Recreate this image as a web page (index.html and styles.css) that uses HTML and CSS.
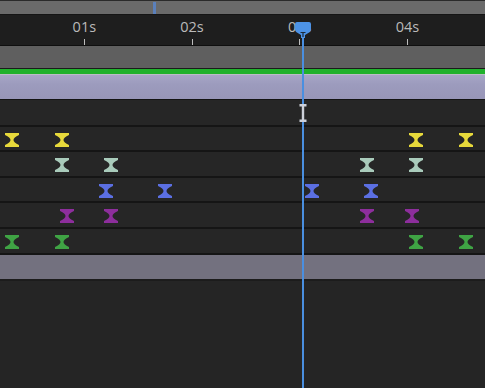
FILE: index.html
```html
<!DOCTYPE html>
<html lang="en">
<head>
  <meta charset="UTF-8">
  <meta name="viewport" content="width=device-width, initial-scale=1.0">
  <title>Timeline</title>
  <link rel="stylesheet" href="styles.css">
</head>
<body>
  <div class="timeline">
    <div class="nav-bar">
      <span class="nav-marker"></span>
    </div>

    <div class="ruler">
      <div class="sec"><span class="label">01s</span><span class="tick"></span></div>
      <div class="sec"><span class="label">02s</span><span class="tick"></span></div>
      <div class="sec"><span class="label">03s</span><span class="tick"></span></div>
      <div class="sec"><span class="label">04s</span><span class="tick"></span></div>
    </div>

    <div class="work-area"></div>
    <div class="green-bar"></div>
    <div class="layer-bar"></div>

    <div class="row row-first"></div>

    <div class="row">
      <svg class="key yellow" style="left: 5px" viewBox="0 0 14 14"><use href="#hourglass"/></svg>
      <svg class="key yellow" style="left: 55px" viewBox="0 0 14 14"><use href="#hourglass"/></svg>
      <svg class="key yellow" style="left: 409px" viewBox="0 0 14 14"><use href="#hourglass"/></svg>
      <svg class="key yellow" style="left: 459px" viewBox="0 0 14 14"><use href="#hourglass"/></svg>
    </div>
    <div class="row">
      <svg class="key mint" style="left: 55px" viewBox="0 0 14 14"><use href="#hourglass"/></svg>
      <svg class="key mint" style="left: 104px" viewBox="0 0 14 14"><use href="#hourglass"/></svg>
      <svg class="key mint" style="left: 360px" viewBox="0 0 14 14"><use href="#hourglass"/></svg>
      <svg class="key mint" style="left: 409px" viewBox="0 0 14 14"><use href="#hourglass"/></svg>
    </div>
    <div class="row">
      <svg class="key blue" style="left: 99px" viewBox="0 0 14 14"><use href="#hourglass"/></svg>
      <svg class="key blue" style="left: 158px" viewBox="0 0 14 14"><use href="#hourglass"/></svg>
      <svg class="key blue" style="left: 305px" viewBox="0 0 14 14"><use href="#hourglass"/></svg>
      <svg class="key blue" style="left: 364px" viewBox="0 0 14 14"><use href="#hourglass"/></svg>
    </div>
    <div class="row">
      <svg class="key purple" style="left: 60px" viewBox="0 0 14 14"><use href="#hourglass"/></svg>
      <svg class="key purple" style="left: 104px" viewBox="0 0 14 14"><use href="#hourglass"/></svg>
      <svg class="key purple" style="left: 360px" viewBox="0 0 14 14"><use href="#hourglass"/></svg>
      <svg class="key purple" style="left: 405px" viewBox="0 0 14 14"><use href="#hourglass"/></svg>
    </div>
    <div class="row">
      <svg class="key green" style="left: 5px" viewBox="0 0 14 14"><use href="#hourglass"/></svg>
      <svg class="key green" style="left: 55px" viewBox="0 0 14 14"><use href="#hourglass"/></svg>
      <svg class="key green" style="left: 409px" viewBox="0 0 14 14"><use href="#hourglass"/></svg>
      <svg class="key green" style="left: 459px" viewBox="0 0 14 14"><use href="#hourglass"/></svg>
    </div>

    <div class="null-bar"></div>
    <div class="empty"></div>

    <!-- playhead sits over everything -->
    <div class="playhead">
      <svg class="playhead-head" viewBox="0 0 18 16">
        <path d="M3 0 H15 Q17 0 17 2 V7.5 Q17 9 15.5 10.2 L11 13 V16 H7 V13 L2.5 10.2 Q1 9 1 7.5 V2 Q1 0 3 0 Z" fill="#4d93e6"/>
        <path d="M6.5 10.5 H11.5 M9 10.5 V15" stroke="#1b2a3a" stroke-width="1.2" fill="none"/>
      </svg>
      <div class="playhead-line"></div>
    </div>

    <svg class="ibeam" viewBox="0 0 10 18">
      <path d="M1.5 1.2 H8.5 M1.5 16.8 H8.5 M5 1 V17" stroke="#cdd1da" stroke-width="2.4" fill="none"/>
    </svg>
  </div>

  <svg width="0" height="0" style="position: absolute">
    <defs>
      <path id="hourglass" d="M0 0 H14 V2 Q8.5 4.5 8.5 7 Q8.5 9.5 14 12 V14 H0 V12 Q5.5 9.5 5.5 7 Q5.5 4.5 0 2 Z"/>
    </defs>
  </svg>
</body>
</html>
```

FILE: styles.css
```css
/* Timeline panel */
body {
  margin: 0;
  background: #252525;
  font-family: 'Open Sans', 'Noto Sans', sans-serif;
  overflow: hidden;
}

.timeline {
  position: relative;
  width: 485px;
  height: 388px;
  display: flex;
  flex-direction: column;
  background: #252525;
}

.nav-bar {
  position: relative;
  height: 13px;
  background: #6a6a6a;
  border-top: 1px solid #2a2a2a;
  border-bottom: 1px solid #151515;
  flex-shrink: 0;
}

.nav-marker {
  position: absolute;
  left: 153px;
  top: 1px;
  width: 3px;
  height: 12px;
  background: #5b80bb;
}

/* Ruler */
.ruler {
  height: 30px;
  display: flex;
  padding-left: 30.5px;
  background: #1e1e1e;
  border-bottom: 1px solid #0f0f0f;
  flex-shrink: 0;
}

.sec {
  width: 107.7px;
  flex-shrink: 0;
  display: flex;
  flex-direction: column;
  align-items: center;
}

.label {
  margin-top: 2px;
  font-size: 14.5px;
  line-height: 20px;
  color: #bababa;
}

.tick {
  margin-top: 2px;
  width: 1px;
  height: 6px;
  background: #bdbdbd;
}

/* Bars */
.work-area {
  height: 22px;
  background: #5f5f5f;
  border-bottom: 1px solid #1b1b1b;
  flex-shrink: 0;
}

.green-bar {
  height: 5px;
  background: #20b12c;
  border-bottom: 1px solid #bcbcc6;
  flex-shrink: 0;
}

.layer-bar {
  height: 24px;
  background: linear-gradient(180deg, #a6a5c6, #9c9bbd 40%, #9896b8);
  border-bottom: 1px solid #141414;
  flex-shrink: 0;
}

/* Property rows */
.row {
  position: relative;
  height: 23.6px;
  border-bottom: 2px solid #151515;
  background: #262626;
  flex-shrink: 0;
}

.row-first {
  height: 24.6px;
}

.key {
  position: absolute;
  top: 6px;
  width: 14px;
  height: 14px;
}

.yellow { fill: #e7d93b; }
.mint { fill: #a9cbbb; }
.blue { fill: #5b6fe2; }
.purple { fill: #8d2e9c; }
.green { fill: #3fa344; }

.null-bar {
  height: 24px;
  background: #73717f;
  border-bottom: 2px solid #1c1c1c;
  flex-shrink: 0;
}

.empty {
  flex: 1;
  background: #252525;
}

/* Playhead */
.playhead {
  position: absolute;
  left: 294px;
  top: 22px;
  bottom: 0;
  width: 18px;
  display: flex;
  flex-direction: column;
  align-items: center;
}

.playhead-head {
  width: 18px;
  height: 16px;
  flex-shrink: 0;
}

.playhead-line {
  flex: 1;
  width: 2px;
  background: #4a8fe0;
}

.ibeam {
  position: absolute;
  left: 298px;
  top: 104px;
  width: 10px;
  height: 18px;
}
```
